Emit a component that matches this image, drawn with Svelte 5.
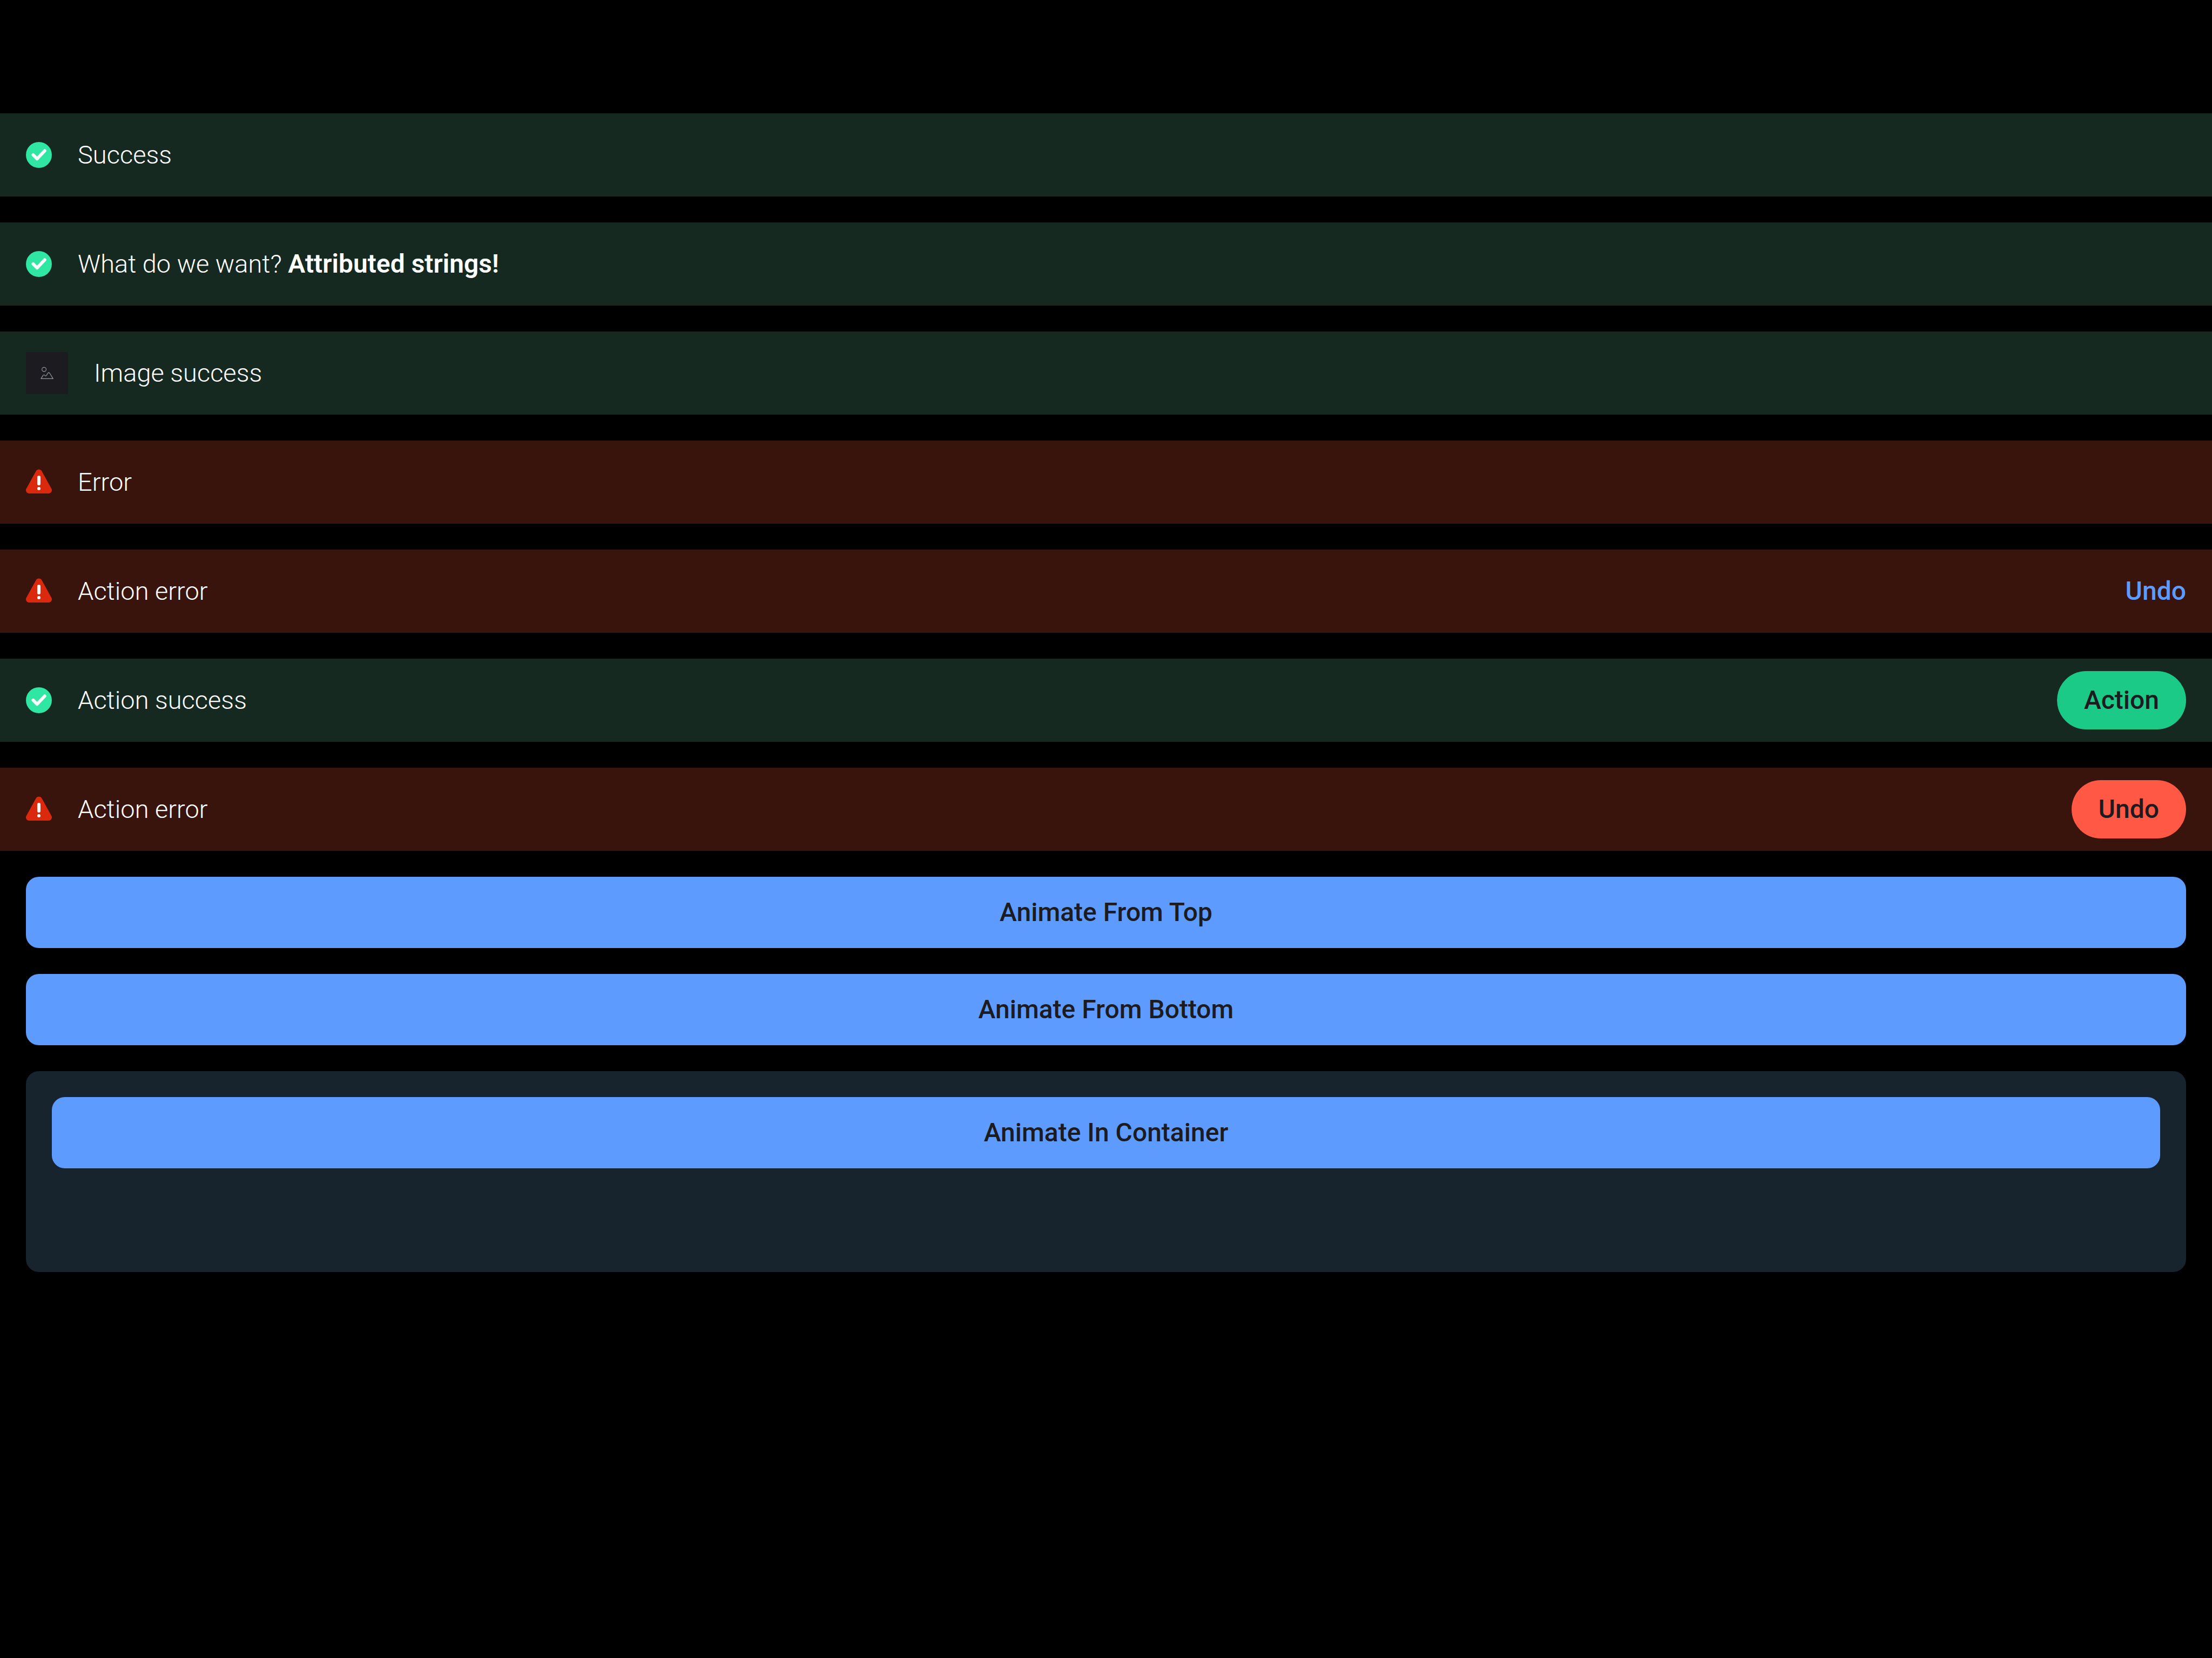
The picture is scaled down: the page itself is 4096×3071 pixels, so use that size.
<script>
  const banners = [
    { kind: 'success', icon: 'check', text: 'Success' },
    { kind: 'success', icon: 'check', text: 'What do we want?', strong: 'Attributed strings!' },
    { kind: 'success', icon: 'image', text: 'Image success' },
    { kind: 'error', icon: 'warning', text: 'Error' },
    { kind: 'error', icon: 'warning', text: 'Action error', action: 'Undo', look: 'link' },
    { kind: 'success', icon: 'check', text: 'Action success', action: 'Action', look: 'pill' },
    { kind: 'error', icon: 'warning', text: 'Action error', action: 'Undo', look: 'pill' }
  ];
</script>

<main class="page">
  {#each banners as banner}
    <section class="banner {banner.kind}">
      {#if banner.icon === 'check'}
        <svg class="icon" viewBox="0 0 48 48" aria-hidden="true">
          <circle cx="24" cy="24" r="24" fill="#2fe6a3" />
          <path d="M13.5 24 L20.6 31.2 L34.8 16.3" fill="none" stroke="#fff" stroke-width="6" stroke-linecap="round" stroke-linejoin="round" />
        </svg>
      {:else if banner.icon === 'warning'}
        <svg class="icon" viewBox="0 0 48 48" aria-hidden="true">
          <path d="M18.7 3.6 A6 6 0 0 1 29.3 3.6 L47.2 36 A6 6 0 0 1 42 45 H6 A6 6 0 0 1 0.8 36 Z" fill="#db290d" />
          <rect x="21" y="12" width="6" height="18" rx="3" fill="#fff" />
          <circle cx="24" cy="36" r="3" fill="#fff" />
        </svg>
      {:else}
        <svg class="thumb" viewBox="0 0 78 78" aria-hidden="true">
          <rect width="78" height="78" fill="#1c1b20" />
          <g fill="none" stroke="#9498a5" stroke-width="1.2" stroke-linejoin="round">
            <circle cx="33.6" cy="32.3" r="3.9" />
            <path d="M28 49.4 L31.6 43.4 Q33.2 41.2 35 43.2 Q36.4 45.4 37.8 43.6 L40.6 39.3 Q42.3 37 44 39.3 L50.3 49.4 Z" />
          </g>
        </svg>
      {/if}
      <p class="text">
        {banner.text}
        {#if banner.strong}<strong>{banner.strong}</strong>{/if}
      </p>
      {#if banner.action}
        <button class="action {banner.look}" type="button">{banner.action}</button>
      {/if}
    </section>
  {/each}

  <div class="stack">
    <button class="primary" type="button">Animate From Top</button>
    <button class="primary" type="button">Animate From Bottom</button>
    <div class="container">
      <button class="primary" type="button">Animate In Container</button>
    </div>
  </div>
</main>

<style>
  :global(body) {
    margin: 0;
    background: #000;
  }

  .page {
    box-sizing: border-box;
    min-height: 100vh;
    padding: 210px 0 48px;
    display: flex;
    flex-direction: column;
    gap: 48px;
    background: #000;
    color: #fff;
    font-family: Roboto, 'Open Sans', sans-serif;
  }

  .banner {
    box-sizing: border-box;
    min-height: 154px;
    padding: 0 48px;
    display: flex;
    align-items: center;
    gap: 48px;
  }

  .success {
    background: #152921;
  }

  .error {
    background: #38140c;
  }

  .icon {
    flex: none;
    width: 48px;
    height: 48px;
  }

  .thumb {
    flex: none;
    width: 78px;
    height: 78px;
  }

  .text {
    flex: 1;
    margin: 0;
    font-size: 47px;
    font-weight: 300;
    line-height: 60px;
  }

  strong {
    font-size: 48px;
    font-weight: 600;
  }

  button {
    border: 0;
    margin: 0;
    font-family: inherit;
    font-size: 48px;
    font-weight: 500;
    line-height: 60px;
    color: #1c1b20;
    cursor: pointer;
  }

  .action {
    flex: none;
  }

  .link {
    padding: 0;
    background: none;
    color: #5d9bff;
  }

  .pill {
    padding: 24px 50px;
    border-radius: 54px;
  }

  .success .pill {
    background: #1bca87;
  }

  .error .pill {
    background: #ff5844;
  }

  .stack {
    padding: 0 48px;
    display: flex;
    flex-direction: column;
    gap: 48px;
  }

  .primary {
    width: 100%;
    padding: 36px 48px;
    border-radius: 24px;
    background: #5d9bff;
  }

  .container {
    padding: 48px 48px 192px;
    border-radius: 24px;
    background: #17232d;
  }
</style>
